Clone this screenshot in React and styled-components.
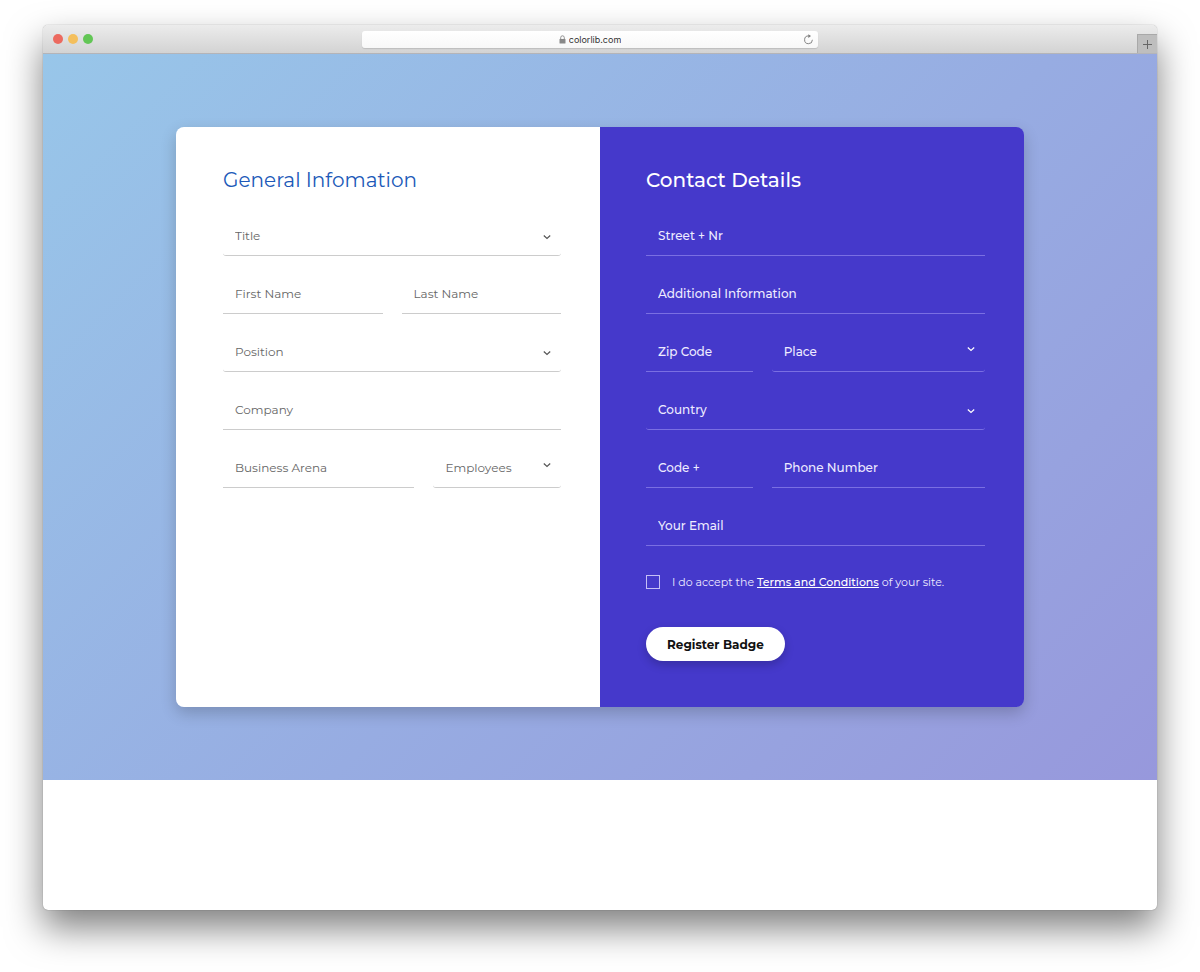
import React from "react";
import styled, { createGlobalStyle, css } from "styled-components";

const GlobalStyle = createGlobalStyle`
  * {
    box-sizing: border-box;
  }
  body {
    margin: 0;
    background-color: #fff;
    font-family: Montserrat, Inter, "Open Sans", sans-serif;
  }
  input,
  select,
  button {
    font-family: inherit;
  }
`;

const Desktop = styled.div`
  display: flex;
  flex-direction: column;
  min-height: 100vh;
  padding: 25px 43px 62px;
`;

const Window = styled.div`
  display: flex;
  flex-direction: column;
  flex: 1;
  overflow: hidden;
  background-color: #fff;
  border-radius: 5px;
  box-shadow: 0 0 1px rgba(0, 0, 0, 0.5), 0 18px 36px rgba(0, 0, 0, 0.5);
`;

const TitleBar = styled.header`
  display: grid;
  grid-template-columns: 1fr minmax(0, 456px) 1fr 20px;
  align-items: center;
  height: 29px;
  background: linear-gradient(#ececec, #d3d3d3);
  border-bottom: solid #b4b4b8 1px;
`;

const Lights = styled.div`
  display: flex;
  gap: 5px;
  padding-left: 10px;
`;

const Light = styled.span`
  width: 10px;
  height: 10px;
  border-radius: 50%;
  background-color: ${props => props.$color};
`;

const AddressBar = styled.div`
  display: grid;
  grid-template-columns: 1fr auto 1fr;
  align-items: center;
  height: 17px;
  padding: 0 4px;
  background: linear-gradient(#fff, #f8f8f8);
  border-radius: 3px;
  box-shadow: 0 1px 1px rgba(0, 0, 0, 0.12);
`;

const Location = styled.div`
  grid-column: 2;
  display: flex;
  align-items: center;
  gap: 3px;
`;

const LocationInput = styled.input`
  field-sizing: content;
  padding: 0;
  border: 0;
  outline: 0;
  background: none;
  color: #333;
  font-family: Inter, Roboto, sans-serif;
  font-size: 9px;
`;

const ChromeButton = styled.button`
  display: flex;
  align-items: center;
  justify-content: center;
  justify-self: end;
  padding: 0;
  border: 0;
  background: none;
  color: #777;
`;

const NewTab = styled(ChromeButton)`
  grid-column: 4;
  align-self: end;
  width: 20px;
  height: 19px;
  background-color: #bebebe;
  border-left: solid #a9a9a9 1px;
  border-top: solid #a9a9a9 1px;
`;

const Hero = styled.main`
  display: flex;
  justify-content: center;
  padding: 73px 20px;
  background: linear-gradient(135deg, #98c6e9 0%, #97ace2 55%, #9798dc 100%);
`;

const Card = styled.form`
  display: grid;
  grid-template-columns: 1fr 1fr;
  width: 100%;
  max-width: 848px;
  overflow: hidden;
  border-radius: 8px;
  box-shadow: 0 6px 16px rgba(0, 0, 0, 0.2);
`;

const Panel = styled.section`
  padding: 40px 39px 46px 47px;
  background-color: #fff;
  color: #666;
  --line: #ccc;
  --arrow: #555;
  --heading: #2059b8;
  --weight: 400;
  ${props =>
    props.$dark &&
    css`
      padding-left: 46px;
      background-color: #4539cb;
      color: #eeebff;
      --line: #7a6fe2;
      --arrow: #fff;
      --heading: #fff;
      --weight: 500;
    `}
`;

const Heading = styled.h2`
  margin: 0 0 25px;
  color: var(--heading);
  font-size: 20px;
  font-weight: var(--weight);
  line-height: 26px;
`;

const Fields = styled.div`
  display: grid;
  gap: 20px;
`;

const Row = styled.div`
  display: grid;
  grid-template-columns: ${props => props.$columns || "1fr"};
  gap: 19px;
`;

const control = css`
  display: block;
  width: 100%;
  height: 38px;
  margin: 0;
  padding: 0 12px 3px;
  border: 0;
  border-bottom: solid var(--line) 1px;
  border-radius: 0;
  outline: 0;
  background: none;
  color: inherit;
  font-size: 12px;
  font-weight: var(--weight);
`;

const Input = styled.input`
  ${control}
  &::placeholder {
    color: inherit;
    opacity: 1;
  }
`;

const SelectWrap = styled.div`
  position: relative;
`;

const StyledSelect = styled.select`
  ${control}
  appearance: none;
  border-radius: 3px;
`;

const Arrow = styled.svg`
  position: absolute;
  right: 10px;
  top: ${props => (props.$raised ? "11px" : "15px")};
  width: 8px;
  height: 8px;
  pointer-events: none;
  fill: none;
  stroke: var(--arrow);
  stroke-width: 1.2;
`;

const Terms = styled.label`
  display: flex;
  align-items: center;
  gap: 12px;
  margin-top: 26px;
  font-size: 11px;
  line-height: 20px;
`;

const Checkbox = styled.input`
  appearance: none;
  width: 14px;
  height: 14px;
  margin: 0;
  border: solid #c5bff5 1px;
  &:checked {
    background-color: #fff;
  }
`;

const TermsLink = styled.a`
  color: #fff;
  font-weight: 500;
`;

const Submit = styled.button`
  height: 34px;
  margin-top: 35px;
  padding: 0 21px;
  border: 0;
  border-radius: 17px;
  background-color: #fff;
  color: #111;
  font-size: 12px;
  font-weight: 700;
  box-shadow: 0 4px 10px rgba(0, 0, 0, 0.2);
  cursor: pointer;
`;

const Field = ({ name, type = "text" }) => (
  <Input type={type} placeholder={name} aria-label={name} />
);

const Select = ({ name, raised }) => (
  <SelectWrap>
    <StyledSelect aria-label={name}>
      <option>{name}</option>
    </StyledSelect>
    <Arrow viewBox="0 0 8 8" $raised={raised}>
      <path d="M0.8 2.5 L4 5.5 L7.2 2.5" />
    </Arrow>
  </SelectWrap>
);

const BrowserBar = () => (
  <TitleBar>
    <Lights>
      <Light $color="#ec6a5f" />
      <Light $color="#f4bf5c" />
      <Light $color="#62c655" />
    </Lights>
    <AddressBar>
      <Location>
        <svg width="7" height="9" viewBox="0 0 7 9">
          <rect x="0.5" y="4" width="6" height="4.5" rx="0.6" fill="#888" />
          <path
            d="M1.7 4.2V2.6a1.8 1.8 0 0 1 3.6 0v1.6"
            fill="none"
            stroke="#888"
            strokeWidth="0.9"
          />
        </svg>
        <LocationInput aria-label="Address" defaultValue="colorlib.com" />
      </Location>
      <ChromeButton type="button" aria-label="Reload">
        <svg width="11" height="11" viewBox="0 0 11 11">
          <path
            d="M5.6 1.9A3.9 3.9 0 1 0 9.4 5.8"
            fill="none"
            stroke="#777"
            strokeWidth="0.9"
          />
          <path d="M5.3 0.2 L8 2 L5.3 3.9 Z" fill="#777" />
        </svg>
      </ChromeButton>
    </AddressBar>
    <NewTab type="button" aria-label="New tab">
      <svg width="9" height="9" viewBox="0 0 9 9">
        <path d="M4.5 0v9M0 4.5h9" stroke="#666" strokeWidth="1" />
      </svg>
    </NewTab>
  </TitleBar>
);

const App = () => {
  return (
    <Desktop>
      <GlobalStyle />
      <Window>
        <BrowserBar />
        <Hero>
          <Card>
            <Panel>
              <Heading>General Infomation</Heading>
              <Fields>
                <Select name="Title" />
                <Row $columns="1fr 1fr">
                  <Field name="First Name" />
                  <Field name="Last Name" />
                </Row>
                <Select name="Position" />
                <Field name="Company" />
                <Row $columns="3fr 2fr">
                  <Field name="Business Arena" />
                  <Select name="Employees" raised />
                </Row>
              </Fields>
            </Panel>
            <Panel $dark>
              <Heading>Contact Details</Heading>
              <Fields>
                <Field name="Street + Nr" />
                <Field name="Additional Information" />
                <Row $columns="1fr 2fr">
                  <Field name="Zip Code" />
                  <Select name="Place" raised />
                </Row>
                <Select name="Country" />
                <Row $columns="1fr 2fr">
                  <Field name="Code +" />
                  <Field name="Phone Number" type="tel" />
                </Row>
                <Field name="Your Email" type="email" />
              </Fields>
              <Terms>
                <Checkbox type="checkbox" />
                <span>
                  I do accept the <TermsLink href="#">Terms and Conditions</TermsLink>{" "}
                  of your site.
                </span>
              </Terms>
              <Submit type="submit">Register Badge</Submit>
            </Panel>
          </Card>
        </Hero>
      </Window>
    </Desktop>
  );
};

export default App;
